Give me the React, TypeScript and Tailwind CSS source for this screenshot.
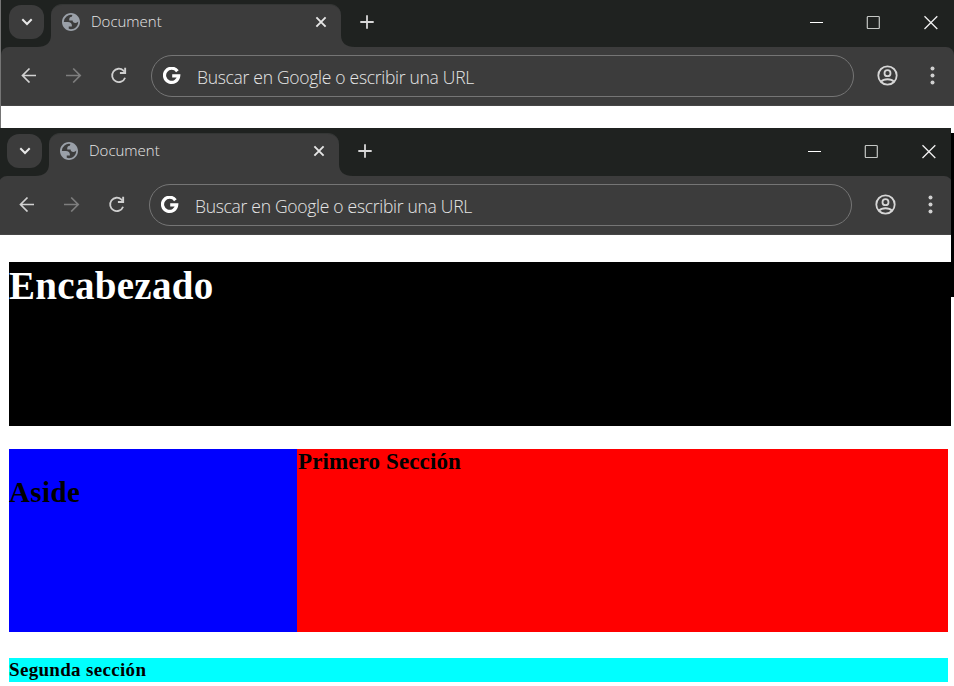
import React from "react";

function Globe() {
  return (
    <svg width="18" height="18" viewBox="2 2 20 20" className="shrink-0">
      <path
        fill="#9aa0a8"
        fillRule="evenodd"
        d="M12 2C6.48 2 2 6.48 2 12s4.48 10 10 10 10-4.48 10-10S17.52 2 12 2zM4 12h4.4c3.407.022 4.922 1.73 4.543 5.127H9.488v2.47a8.004 8.004 0 0 0 10.498-8.083C19.327 12.504 18.332 13 17 13c-2.137 0-3.206-.916-3.206-2.75h-3.748c-.274-2.728.683-4.092 2.87-4.092 0-.975.327-1.597.811-1.97A8.004 8.004 0 0 0 4 12z"
      />
    </svg>
  );
}

function TabStrip() {
  return (
    <div className="flex h-[47px] w-full items-start bg-[#1f2220]">
      <div className="ml-2 mt-[5px] flex h-[34px] w-[35px] items-center justify-center rounded-[12px] bg-[#3c3c3c]">
        <svg width="12" height="8" viewBox="0 0 12 8" fill="none" stroke="#e8e8e8" strokeWidth="2">
          <path d="M1.3 1.3 6 6 10.7 1.3" />
        </svg>
      </div>
      <svg width="14" height="12" viewBox="0 0 14 12" className="-ml-[7px] mt-[35px] shrink-0">
        <path fill="#3c3c3c" d="M0 12C9 12 14 8 14 0V12Z" />
      </svg>
      <div className="mt-[4px] flex h-[43px] w-[290px] items-start rounded-t-[11px] border-t border-[#343635] bg-[#3c3c3c] pl-[11px] pt-2">
        <Globe />
        <span className="ml-[11px] -mt-[2px] w-[224px] whitespace-nowrap text-[15px] font-light leading-[20px] tracking-[0px] text-[#e6e6e6]">
          Document
        </span>
        <svg width="12" height="12" viewBox="0 0 12 12" className="mt-[3px]" stroke="#e6e6e6" strokeWidth="1.9">
          <path d="M1.4 1.4 10.6 10.6M10.6 1.4 1.4 10.6" />
        </svg>
      </div>
      <svg width="14" height="12" viewBox="0 0 14 12" className="mt-[35px] shrink-0">
        <path fill="#3c3c3c" d="M0 0C0 8 5 12 14 12H0Z" />
      </svg>
      <svg width="14" height="14" viewBox="0 0 14 14" className="ml-[5px] mt-[15px] shrink-0" stroke="#d8d8d8" strokeWidth="1.8">
        <path d="M7 .3V13.7M.3 7H13.7" />
      </svg>
      <div className="ml-[435px] mt-[15px] flex shrink-0 items-start">
        <svg width="14" height="14" viewBox="0 0 14 14" className="mr-[43px]">
          <path d="M1 7.5H14" stroke="#fff" />
        </svg>
        <svg width="14" height="14" viewBox="0 0 14 14" className="mr-11" fill="none">
          <rect x="1.3" y="1.5" width="12" height="12" rx=".8" stroke="#c4c7c4" strokeWidth="1.2" />
        </svg>
        <svg width="14" height="15" viewBox="0 0 14 15" stroke="#f0f0f0" strokeWidth="1.3">
          <path d="M.5 1.2 13.3 14M13.3 1.2 .5 14" />
        </svg>
      </div>
    </div>
  );
}

function Toolbar() {
  return (
    <div className="w-full bg-[#1f2220]">
      <div className="flex h-[59px] w-full items-start rounded-t-[8px] border-b border-[#464646] bg-[#3c3c3c] pt-2">
        <svg width="16" height="16" viewBox="0 0 16 16" className="ml-5 mt-[12px] shrink-0" fill="none" stroke="#d2d2d2" strokeWidth="1.7">
          <path d="M15 8.5H1.5M8.5 1.5 1.5 8.5 8.5 15.5" />
        </svg>
        <svg width="16" height="16" viewBox="0 0 16 16" className="ml-[29px] mt-[12px] shrink-0" fill="none" stroke="#7e7e7e" strokeWidth="1.7">
          <path d="M0 8.5H14.2M7.2 1.5 14.2 8.5 7.2 15.5" />
        </svg>
        <svg width="18" height="17" viewBox="0 0 18 17" className="ml-7 mt-[12px] shrink-0" fill="none">
          <path d="M15.1 10.8A6.7 6.7 0 1 1 13.5 3.6L14.5 4.6" stroke="#cfcfcf" strokeWidth="1.8" />
          <path d="M9.9 6.9V5.1H14.2V.8H16.1V6.9Z" fill="#cfcfcf" />
        </svg>
        <div className="ml-[23px] flex h-[42px] w-[703px] shrink-0 items-center rounded-full border border-[#757575] pl-[11px]">
          <svg width="18" height="18" viewBox="0 0 18 18" fill="none" className="shrink-0">
            <path d="M14.4 4.2A7.1 7.1 0 1 0 15.7 8.9H9.2" stroke="#fff" strokeWidth="3.2" />
          </svg>
          <span className="ml-4 mt-[1px] whitespace-nowrap text-[17.5px] font-light leading-[24px] tracking-[-0.29px] text-[#e6e6e6]">
            Buscar en Google o escribir una URL
          </span>
        </div>
        <svg width="22" height="22" viewBox="0 0 22 22" className="ml-[23px] mt-[10px] shrink-0" fill="none" stroke="#d6d6d6" strokeWidth="1.8">
          <circle cx="10.5" cy="10.5" r="9.2" />
          <circle cx="10.5" cy="8.2" r="3" />
          <path d="M4 16.7C7 13.4 14 13.4 17 16.7" />
        </svg>
        <svg width="6" height="20" viewBox="0 0 6 20" className="ml-[31px] mt-[11px] shrink-0" fill="#d0d0d0">
          <circle cx="2.5" cy="2.5" r="2" />
          <circle cx="2.5" cy="9.4" r="2" />
          <circle cx="2.5" cy="16.4" r="2" />
        </svg>
      </div>
    </div>
  );
}

function BrowserChrome() {
  return (
    <div className="w-[953px] shrink-0 overflow-hidden font-['Open_Sans',sans-serif]">
      <TabStrip />
      <Toolbar />
    </div>
  );
}

export default function App() {
  return (
    <div className="h-[686px] w-[954px] overflow-hidden bg-white font-['Liberation_Serif',serif] font-bold text-black">
      <div className="h-[128px] border-l border-[#757575]">
        <BrowserChrome />
      </div>
      <div className="flex items-start">
        <div className="w-[951px] shrink-0 overflow-hidden">
          <div className="bg-[#1f2220] pt-px">
            <div className="-ml-px">
              <BrowserChrome />
            </div>
          </div>
          <header className="ml-[9px] mt-[27px] h-[164px] bg-black text-white">
            <h1 className="pt-px text-[39px] leading-[45px] tracking-[0.3px]">Encabezado</h1>
          </header>
          <main className="ml-[9px] mr-[3px] mt-[23px] flex h-[183px]">
            <aside className="w-[288px] bg-[#0000ff] pt-[26px]">
              <h2 className="text-[29px] leading-[34px] tracking-[0.4px]">Aside</h2>
            </aside>
            <section className="flex-1 bg-[#ff0000]">
              <h3 className="pl-px text-[23px] leading-[26px] tracking-[0.12px]">Primero Sección</h3>
            </section>
          </main>
          <section className="ml-[9px] mr-[3px] mt-[26px] h-6 bg-[#00ffff]">
            <h4 className="text-[19px] leading-[24px] tracking-[0.32px]">Segunda sección</h4>
          </section>
        </div>
        <div className="mt-[5px] h-[164px] w-[3px] bg-black" />
      </div>
    </div>
  );
}
